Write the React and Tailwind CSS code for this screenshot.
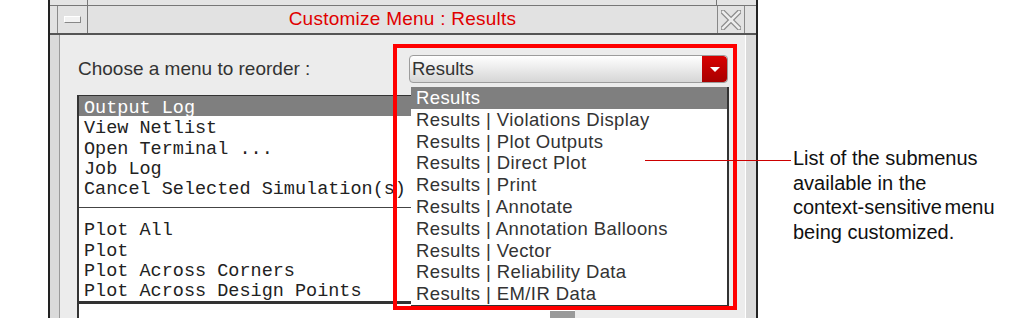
import React from 'react';

const leftTop = ['Output Log', 'View Netlist', 'Open Terminal ...', 'Job Log', 'Cancel Selected Simulation(s)'];
const leftBottom = ['Plot All', 'Plot', 'Plot Across Corners', 'Plot Across Design Points'];
const submenus = [
  'Results',
  'Results | Violations Display',
  'Results | Plot Outputs',
  'Results | Direct Plot',
  'Results | Print',
  'Results | Annotate',
  'Results | Annotation Balloons',
  'Results | Vector',
  'Results | Reliability Data',
  'Results | EM/IR Data',
];

function CloseIcon() {
  return (
    <svg width="20" height="20" viewBox="0 0 20 20">
      <path d="M2 2 L18 18 M18 2 L2 18" stroke="#8a8a8a" strokeWidth="5" strokeLinecap="square" />
      <path d="M2 2 L18 18 M18 2 L2 18" stroke="#ececec" strokeWidth="2.5" strokeLinecap="square" />
    </svg>
  );
}

export default function App() {
  return (
    <div className="relative w-[1013px] h-[318px] overflow-hidden bg-white font-['Liberation_Sans',Arial,sans-serif]">
      <div className="flex h-full">
        <div className="w-[48px] shrink-0" />

        {/* window */}
        <div className="flex flex-col w-[710px] h-full border-x-2 border-[#222]">
          {/* strip above title */}
          <div className="flex h-[5px] bg-[#e4e4e4]">
            <div className="w-[38px] border-r border-[#777]" />
            <div className="flex-1 border-r border-[#777]" />
            <div className="w-[39px]" />
          </div>

          {/* title bar */}
          <div className="flex h-[30px] bg-[#e2e2e2] border-t border-b-2 border-t-[#777] border-b-[#555]">
            <div className="w-[8px] border-r border-[#8a8a8a]" />
            <div className="w-[30px] border-r border-[#777] flex items-center justify-center">
              <div className="w-[17px] h-[7px] bg-[#f2f2f2] border border-t-white border-l-white border-r-[#888] border-b-[#888]" />
            </div>
            <div className="flex-1 flex items-center justify-center text-[19px] tracking-[0.25px] text-[#e00000]">
              Customize Menu : Results
            </div>
            <div className="w-[28px] border-x border-[#888] flex items-center justify-center">
              <CloseIcon />
            </div>
            <div className="w-[11px]" />
          </div>

          {/* body */}
          <div className="flex flex-1 min-h-0">
            <div className="w-[9px] bg-[#dadada] border-r border-[#9a9a9a] box-content" />
            <div className="flex flex-col flex-1 bg-[#ececec] pt-[20px]">
              <div className="flex items-center h-[28px]">
                <span className="pl-[18px] text-[19px] text-[#333]">Choose a menu to reorder :</span>
                <div className="ml-auto mr-[17px] flex w-[319px] h-[28px] rounded-[4px] border border-[#9c9c9c] bg-gradient-to-b from-white to-[#d6d6d6] overflow-hidden">
                  <span className="flex-1 pl-[2px] text-[18.5px] leading-[26px] text-[#333]">Results</span>
                  <div className="w-[25px] flex items-center justify-center bg-gradient-to-b from-[#d80000] to-[#a80000] rounded-r-[4px]">
                    <div className="w-0 h-0 border-x-[5px] border-x-transparent border-t-[5px] border-t-white" />
                  </div>
                </div>
              </div>

              {/* listbox */}
              <div className="flex flex-col flex-1 mt-[12px] ml-[17px] w-[498px] bg-white border-l-2 border-t border-[#333] font-['Liberation_Mono',monospace] text-[18.5px] text-[#222]">
                <div className="flex flex-col">
                  {leftTop.map((t, i) => (
                    <div key={t} className={`h-[20.3px] pt-[4px] leading-[17px] pl-[5px] whitespace-nowrap ${i === 0 ? 'bg-[#7f7f7f] text-white' : ''}`}>
                      {t}
                    </div>
                  ))}
                </div>
                <div className="h-[10px]" />
                <div className="h-px bg-[#444]" />
                <div className="h-[10px]" />
                <div className="flex flex-col">
                  {leftBottom.map((t) => (
                    <div key={t} className="h-[20.3px] pt-[4px] leading-[17px] pl-[5px] whitespace-nowrap">{t}</div>
                  ))}
                </div>
                <div className="h-[3px] mt-px bg-[#333]" />
                <div className="flex flex-1">
                  <div className="flex-1" />
                  <div className="w-[25px] mt-[7px] bg-[#9a9a9a]" />
                </div>
              </div>
            </div>
            <div className="w-[11px] bg-[#dadada] border-l border-white" />
          </div>
        </div>
      </div>

      {/* dropdown popup */}
      <div className="absolute left-[411px] top-[87px] w-[318px] bg-white border-r-2 border-b-2 border-[#333] text-[18.5px] tracking-[0.4px] text-[#333]">
        {submenus.map((t, i) => (
          <div key={t} className={`h-[21.8px] leading-[22.5px] pl-[5px] whitespace-nowrap ${i === 0 ? 'bg-[#7f7f7f] text-white' : ''}`}>
            {t}
          </div>
        ))}
      </div>

      {/* highlight frame */}
      <div className="absolute left-[393px] top-[44px] w-[344px] h-[266px] border-4 border-[#ff0000]" />

      {/* callout */}
      <div className="absolute left-[645px] top-[160px] w-[146px] h-px bg-[#cc0000]" />
      <div className="absolute left-[793px] top-[146px] text-[20px] leading-[24.5px] text-[#111]">
        <div>List of the submenus</div>
        <div>available in the</div>
        <div className="[word-spacing:-3px]">context-sensitive menu</div>
        <div>being customized.</div>
      </div>
    </div>
  );
}
